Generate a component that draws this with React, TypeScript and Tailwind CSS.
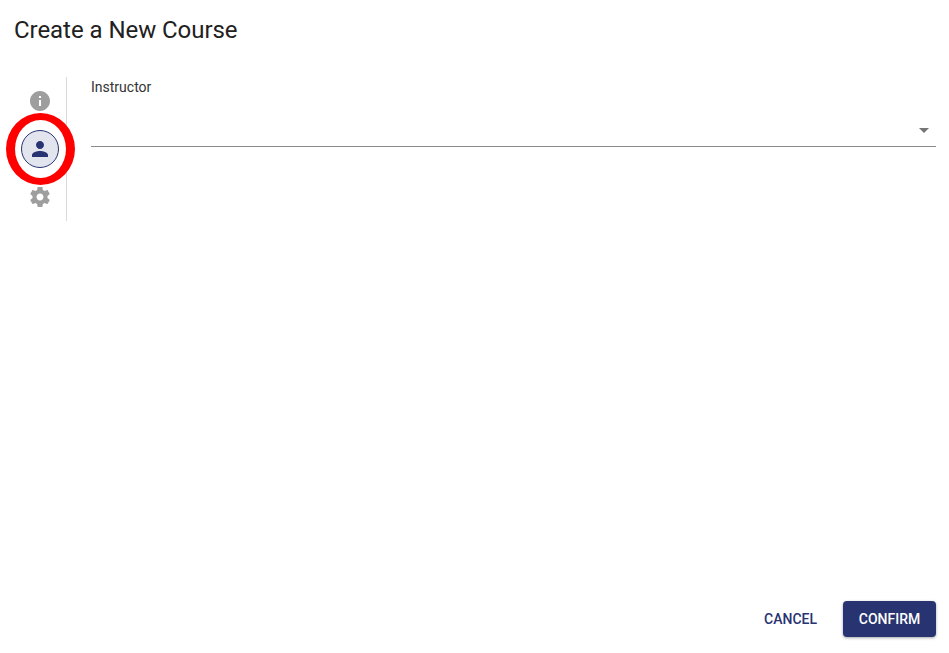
const InfoIcon = () => (
  <svg width="24" height="24" viewBox="0 0 24 24" fill="#9e9e9e">
    <path d="M12 2C6.48 2 2 6.48 2 12s4.48 10 10 10 10-4.48 10-10S17.52 2 12 2zm1 15h-2v-6h2v6zm0-8h-2V7h2v2z" />
  </svg>
);

const PersonIcon = () => (
  <svg width="24" height="24" viewBox="0 0 24 24" fill="#283371">
    <path d="M12 12c2.21 0 4-1.79 4-4s-1.79-4-4-4-4 1.79-4 4 1.79 4 4 4zm0 2c-2.67 0-8 1.34-8 4v2h16v-2c0-2.66-5.33-4-8-4z" />
  </svg>
);

const GearIcon = () => (
  <svg width="24" height="24" viewBox="0 0 24 24" fill="#9e9e9e">
    <path d="M19.43 12.98c.04-.32.07-.64.07-.98s-.03-.66-.07-.98l2.11-1.65c.19-.15.24-.42.12-.64l-2-3.46c-.12-.22-.39-.3-.61-.22l-2.49 1c-.52-.4-1.08-.73-1.69-.98l-.38-2.65C14.46 2.18 14.25 2 14 2h-4c-.25 0-.46.18-.49.42l-.38 2.65c-.61.25-1.17.59-1.69.98l-2.49-1c-.23-.09-.49 0-.61.22l-2 3.46c-.13.22-.07.49.12.64l2.11 1.65c-.04.32-.07.65-.07.98s.03.66.07.98l-2.11 1.65c-.19.15-.24.42-.12.64l2 3.46c.12.22.39.3.61.22l2.49-1c.52.4 1.08.73 1.69.98l.38 2.65c.03.24.24.42.49.42h4c.25 0 .46-.18.49-.42l.38-2.65c.61-.25 1.17-.59 1.69-.98l2.49 1c.23.09.49 0 .61-.22l2-3.46c.12-.22.07-.49-.12-.64l-2.11-1.65zM12 15.5c-1.93 0-3.5-1.57-3.5-3.5s1.57-3.5 3.5-3.5 3.5 1.57 3.5 3.5-1.57 3.5-3.5 3.5z" />
  </svg>
);

export default function App() {
  return (
    <div className="h-[653px] w-[949px] flex flex-col bg-white font-['Roboto',sans-serif] text-[#212121] overflow-hidden">
      <h1 className="pl-[14px] pt-[16px] text-[24px] leading-[28px] font-normal tracking-[-0.05px]">Create a New Course</h1>

      <div className="flex flex-1 mt-[33px] pr-[13px] items-start">
        {/* stepper rail */}
        <div className="relative w-[67px] h-[144px] border-r border-[#d9d9d9] flex flex-col items-center pl-[13px] pt-[12px] gap-[24px]">
          <InfoIcon />
          <div className="w-[38px] h-[38px] -my-[7px] rounded-full bg-[#e3e5ee] border border-[#283371] flex items-center justify-center">
            <PersonIcon />
          </div>
          <GearIcon />
          <div className="absolute left-[6px] top-[36px] w-[69px] h-[72px] rounded-[50%] border-x-[9px] border-y-[7px] border-[#ff0000]" />
        </div>

        {/* field */}
        <div className="flex-1 ml-[24px]">
          <label className="block text-[14px] leading-[20px] text-[#333333]">Instructor</label>
          <div className="relative h-[50px] border-b border-[#8c8c8c]">
            <svg className="absolute right-[7px] top-[31px]" width="10" height="5" viewBox="0 0 10 5" fill="#757575">
              <path d="M0 0h10L5 5z" />
            </svg>
          </div>
        </div>
      </div>

      <div className="flex justify-end items-center pr-[13px] pb-[16px] gap-[10px]">
        <button className="h-[36px] px-[16px] text-[14px] font-medium text-[#283371] uppercase">Cancel</button>
        <button className="h-[36px] w-[93px] rounded-[4px] bg-[#283371] text-[14px] font-medium text-white uppercase shadow-[0_1px_3px_rgba(0,0,0,0.35)]">Confirm</button>
      </div>
    </div>
  );
}
